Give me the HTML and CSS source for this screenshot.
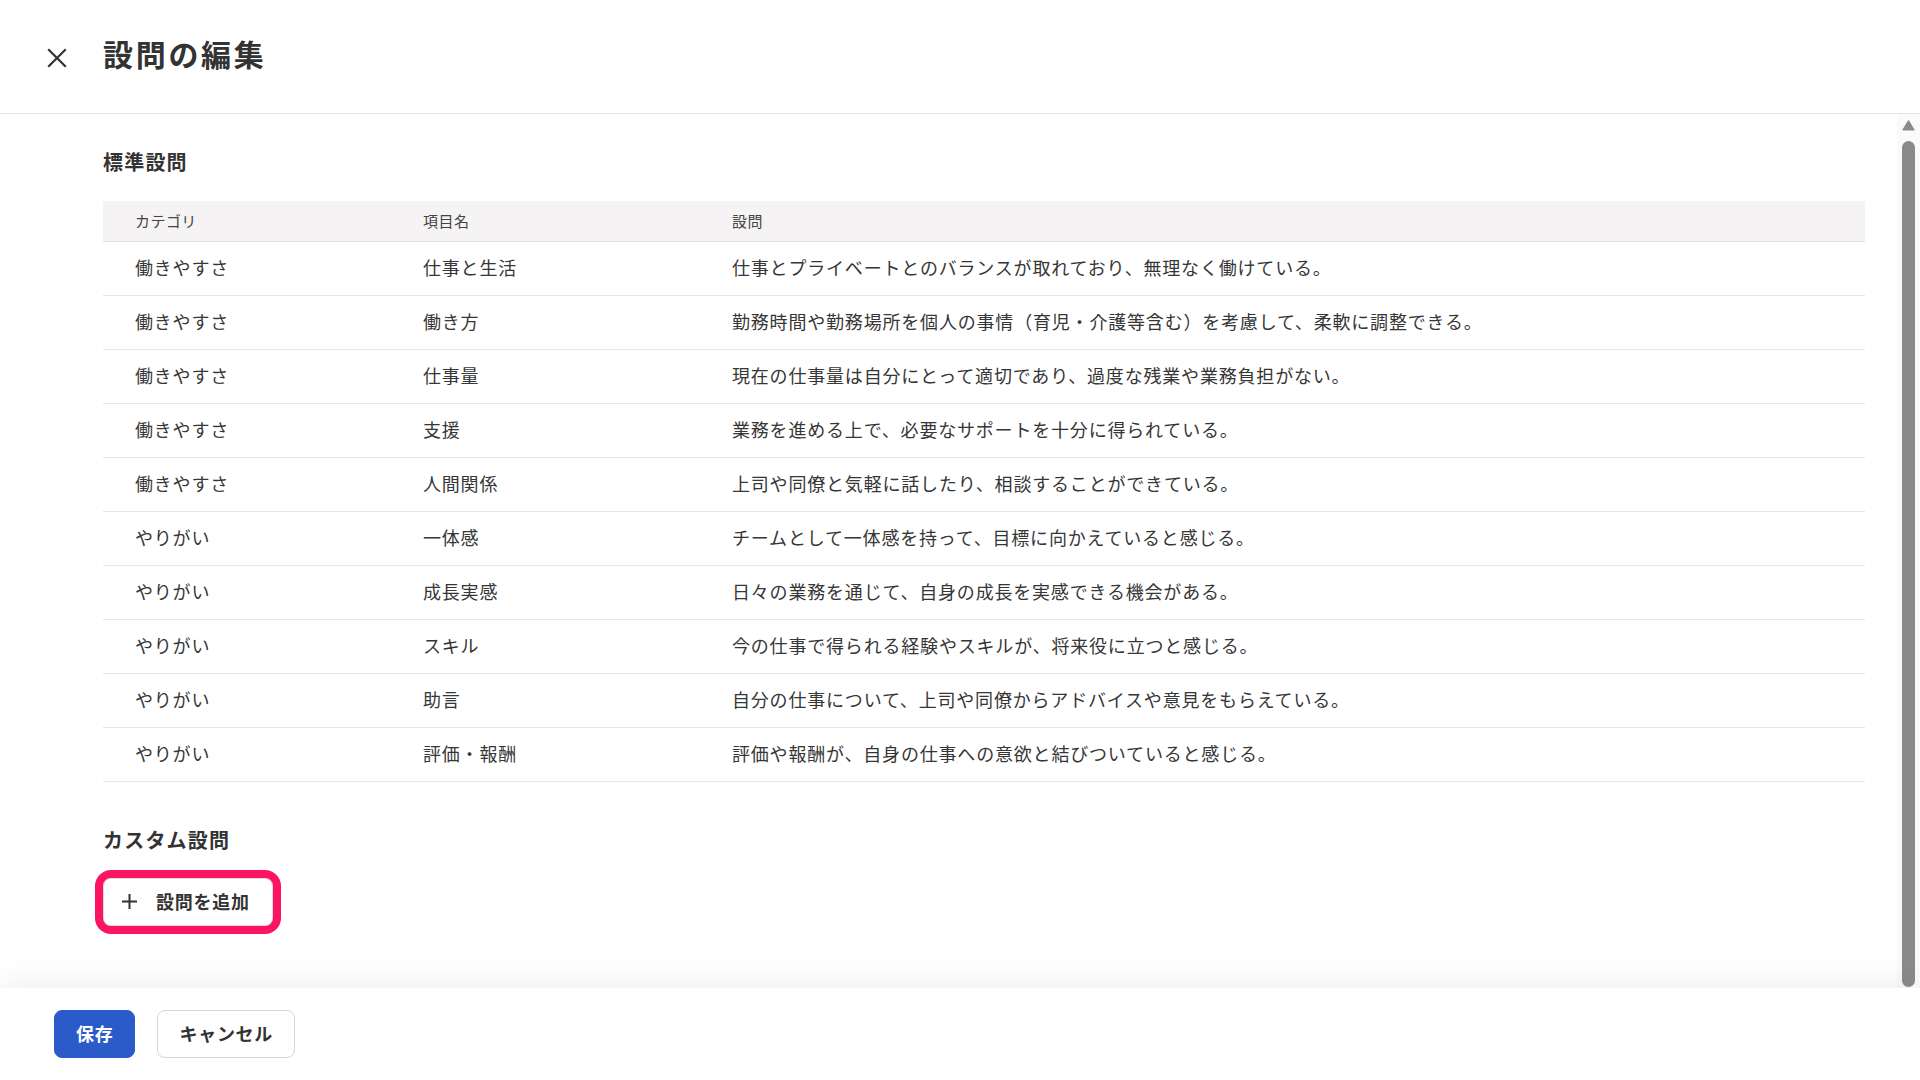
FILE: index.html
```html
<!DOCTYPE html>
<html lang="ja">
<head>
<meta charset="UTF-8" />
<meta name="viewport" content="width=device-width, initial-scale=1" />
<title>設問の編集</title>
<link rel="stylesheet" href="styles.css">
</head>
<body>

<header class="topbar">
  <button class="close-btn" aria-label="閉じる">
    <svg width="20" height="20" viewBox="0 0 20 20">
      <path d="M2 2 L18 18 M18 2 L2 18" stroke="#333" stroke-width="2.2" fill="none" stroke-linecap="square" />
    </svg>
  </button>
  <h1 class="title">設問の編集</h1>
</header>

<div class="page-body">
  <main class="content">
    <h2 class="section-title">標準設問</h2>
    <table class="questions">
      <colgroup>
        <col class="col-cat" />
        <col class="col-name" />
        <col />
      </colgroup>
      <thead>
        <tr><th>カテゴリ</th><th>項目名</th><th>設問</th></tr>
      </thead>
      <tbody>
        <tr><td>働きやすさ</td><td>仕事と生活</td><td>仕事とプライベートとのバランスが取れており、無理なく働けている。</td></tr>
        <tr><td>働きやすさ</td><td>働き方</td><td>勤務時間や勤務場所を個人の事情（育児・介護等含む）を考慮して、柔軟に調整できる。</td></tr>
        <tr><td>働きやすさ</td><td>仕事量</td><td>現在の仕事量は自分にとって適切であり、過度な残業や業務負担がない。</td></tr>
        <tr><td>働きやすさ</td><td>支援</td><td>業務を進める上で、必要なサポートを十分に得られている。</td></tr>
        <tr><td>働きやすさ</td><td>人間関係</td><td>上司や同僚と気軽に話したり、相談することができている。</td></tr>
        <tr><td>やりがい</td><td>一体感</td><td>チームとして一体感を持って、目標に向かえていると感じる。</td></tr>
        <tr><td>やりがい</td><td>成長実感</td><td>日々の業務を通じて、自身の成長を実感できる機会がある。</td></tr>
        <tr><td>やりがい</td><td>スキル</td><td>今の仕事で得られる経験やスキルが、将来役に立つと感じる。</td></tr>
        <tr><td>やりがい</td><td>助言</td><td>自分の仕事について、上司や同僚からアドバイスや意見をもらえている。</td></tr>
        <tr><td>やりがい</td><td>評価・報酬</td><td>評価や報酬が、自身の仕事への意欲と結びついていると感じる。</td></tr>
      </tbody>
    </table>

    <h2 class="section-title custom-title">カスタム設問</h2>
    <button class="add-btn">
      <svg width="15" height="15" viewBox="0 0 15 15">
        <path d="M7.5 0 V15 M0 7.5 H15" stroke="#333" stroke-width="2" fill="none" />
      </svg>
      <span>設問を追加</span>
    </button>
  </main>

  <div class="scrollbar">
    <svg class="scroll-arrow" width="13" height="11" viewBox="0 0 13 11">
      <path d="M6.5 1.2 L11.8 9.8 H1.2 Z" fill="#8a8a8a" stroke="#8a8a8a" stroke-width="1.6" stroke-linejoin="round" />
    </svg>
    <div class="scroll-thumb"></div>
  </div>
</div>

<footer class="footer">
  <button class="btn btn-primary">保存</button>
  <button class="btn btn-secondary">キャンセル</button>
</footer>

</body>
</html>
```

FILE: styles.css
```css
html, body {
  height: 100%;
}
body {
  margin: 0;
  font-family: "Noto Sans CJK JP", "Noto Sans", sans-serif;
  color: #333;
  background-color: #fff;
  display: flex;
  flex-direction: column;
  overflow: hidden;
}
button {
  font-family: inherit;
  cursor: pointer;
}

/* header */
.topbar {
  height: 113px;
  flex-shrink: 0;
  display: flex;
  align-items: center;
  padding-left: 47px;
  border-bottom: 1px solid #e6e6e6;
  box-sizing: content-box;
}
.close-btn {
  width: 20px;
  height: 20px;
  padding: 0;
  border: none;
  background: none;
  display: flex;
  margin-top: 2px;
}
.title {
  margin: 0 0 6px 36px;
  font-size: 30px;
  font-weight: 700;
  letter-spacing: 0.09em;
  line-height: 1.3;
}

/* body + fake scrollbar */
.page-body {
  flex: 1;
  min-height: 0;
  display: flex;
}
.content {
  flex: 1;
  min-width: 0;
  overflow: hidden;
  padding: 34px 32px 0 103px;
}
.scrollbar {
  width: 23px;
  flex-shrink: 0;
  background-color: #fafafa;
  display: flex;
  flex-direction: column;
  align-items: center;
}
.scroll-arrow {
  margin-top: 6px;
}
.scroll-thumb {
  width: 13px;
  height: 846px;
  margin-top: 10px;
  border-radius: 7px;
  background-color: #8a8a8a;
}

.section-title {
  margin: 0;
  font-size: 20px;
  font-weight: 700;
  letter-spacing: 0.06em;
  line-height: 28px;
}
.custom-title {
  margin-top: 44px;
}

/* table */
.questions {
  width: 100%;
  margin-top: 25px;
  border-collapse: collapse;
  table-layout: fixed;
}
.col-cat {
  width: 288px;
}
.col-name {
  width: 309px;
}
.questions th {
  height: 40px;
  padding: 0 32px 1px;
  box-sizing: border-box;
  text-align: left;
  font-size: 15px;
  font-weight: 400;
  letter-spacing: 0.03em;
  color: #444;
  background-color: #f5f3f4;
  border-bottom: 1px solid #e4e1e2;
}
.questions td {
  height: 50px;
  padding: 0 32px 3px;
  font-size: 18px;
  letter-spacing: 0.045em;
  color: #363636;
  border-bottom: 1px solid #e6e6e6;
  white-space: nowrap;
}

/* custom question */
.add-btn {
  margin-top: 24px;
  height: 48px;
  display: flex;
  align-items: center;
  gap: 19px;
  padding: 0 22px 2px 18px;
  background-color: #fff;
  border: 1px solid #dcdcdc;
  border-radius: 8px;
  outline: 8px solid #fd1463;
  outline-offset: 0;
  font-size: 18px;
  font-weight: 700;
  letter-spacing: 0.04em;
  color: #333;
}
.add-btn svg {
  margin-top: 2px;
}

/* footer */
.footer {
  position: fixed;
  left: 0;
  right: 0;
  bottom: 0;
  height: 92px;
  box-sizing: border-box;
  padding: 22px 0 0 54px;
  display: flex;
  gap: 22px;
  background-color: #fff;
  box-shadow: 0 -10px 24px rgba(0, 0, 0, 0.05);
}
.btn {
  height: 48px;
  padding: 0 21px 2px;
  border-radius: 8px;
  font-size: 18px;
  font-weight: 700;
  letter-spacing: 0.04em;
}
.btn-primary {
  background-color: #2a5bc8;
  border: 1px solid #2a5bc8;
  color: #fff;
}
.btn-secondary {
  background-color: #fff;
  border: 1px solid #d6d6d6;
  color: #333;
}
```
